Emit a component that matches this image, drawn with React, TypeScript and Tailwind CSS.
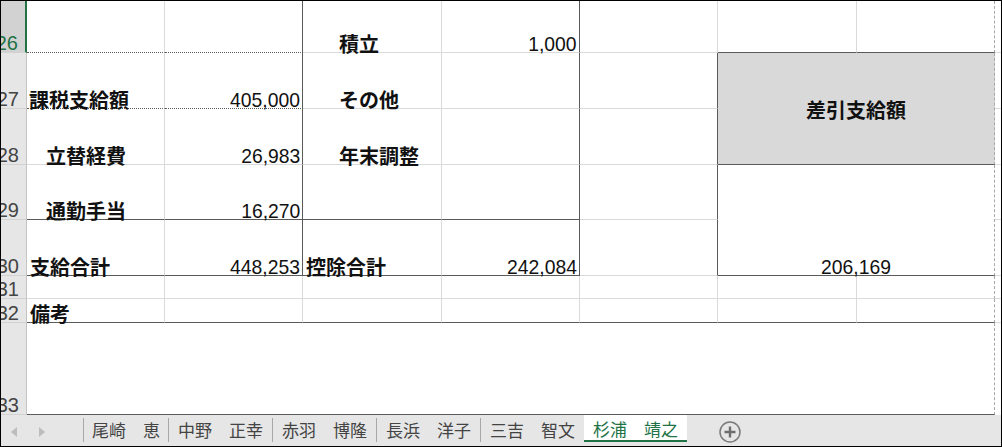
import React from "react";

const lb = "border-b border-b-[#dadada]";
const lr = "border-r border-r-[#dadada]";
const db = "border-b border-b-[#5a5a5a]";
const dr = "border-r border-r-[#5a5a5a]";
const ob = "border-b border-b-[#5a5a5a] [border-bottom-style:dotted]";
const xr = "border-r border-r-[#a8a8a8] [border-right-style:dashed]";

function C({ cls = "", children }: { cls?: string; children?: React.ReactNode }) {
  return (
    <div className={`flex items-end leading-[17px] whitespace-nowrap ${cls}`}>
      {children}
    </div>
  );
}

function N({ v, center = false }: { v: string; center?: boolean }) {
  return (
    <span
      className={`inline-block text-[21px] leading-[17px] scale-x-[0.92] font-['Liberation_Sans',sans-serif] ${
        center ? "origin-center" : "origin-right"
      }`}
    >
      {v}
    </span>
  );
}

function RH({ n, sel = false }: { n: string; sel?: boolean }) {
  return (
    <div
      className={`flex items-end justify-end pr-[8px] leading-[17px] overflow-hidden border-b border-b-[#d2d2d2] font-['Liberation_Sans',sans-serif] ${
        sel
          ? "bg-[#d2d2d2] text-[#217346] border-r-2 border-r-[#217346]"
          : "bg-[#e6e6e6] text-[#444444] border-r border-r-[#c4c4c4]"
      }`}
    >
      <span className="-mr-px">{n}</span>
    </div>
  );
}

const lbl = "font-bold text-[#111111]";
const num = "justify-end pr-[2px] text-[#111111]";

function Sep() {
  return <div className="w-px h-[24px] mt-[3px] bg-[#a8a8a8]" />;
}

function Tab({ name, cls = "px-[9px]" }: { name: string; cls?: string }) {
  return (
    <div className={`h-[30px] flex items-center text-[17px] text-[#444444] whitespace-nowrap ${cls}`}>
      {name}
    </div>
  );
}

export default function App() {
  return (
    <div className="w-[1002px] h-[447px] border border-black bg-white overflow-hidden font-['Noto_Sans_CJK_JP','Noto_Sans',sans-serif] text-[20px]">
      <div className="grid grid-cols-[26px_138px_138px_139px_138px_138px_139px_138px_6px] grid-rows-[52px_56px_56px_55px_56px_23px_24px_92px]">
        {/* Row 26 */}
        <RH n="26" sel />
        <C cls={`${ob} ${lr}`} />
        <C cls={`${ob} ${dr}`} />
        <C cls={`${lb} ${lr} pl-[36px] ${lbl}`}>積立</C>
        <C cls={`${lb} ${dr} ${num}`}><N v="1,000" /></C>
        <C cls={`${lb} ${lr}`} />
        <C cls={`${db} ${lr}`} />
        <C cls={`${db} ${xr}`} />
        <C cls={lb} />

        {/* Row 27 */}
        <RH n="27" />
        <C cls={`${ob} ${lr} pl-[2px] ${lbl}`}>課税支給額</C>
        <C cls={`${ob} ${dr} ${num}`}><N v="405,000" /></C>
        <C cls={`${lb} ${lr} pl-[36px] ${lbl}`}>その他</C>
        <C cls={`${lb} ${dr}`} />
        <C cls={`${lb} ${dr}`} />
        <div className={`col-start-7 col-span-2 row-start-2 row-span-2 flex items-center justify-center bg-[#d9d9d9] ${db} ${xr} font-bold text-[#111111] leading-none pt-[2px]`}>
          差引支給額
        </div>
        <C cls={lb} />

        {/* Row 28 */}
        <RH n="28" />
        <C cls={`${lb} ${lr} pl-[19px] ${lbl}`}>立替経費</C>
        <C cls={`${lb} ${dr} ${num}`}><N v="26,983" /></C>
        <C cls={`${lb} ${lr} pl-[36px] ${lbl}`}>年末調整</C>
        <C cls={`${lb} ${dr}`} />
        <C cls={`${lb} ${dr}`} />
        <C cls={lb} />

        {/* Row 29 */}
        <RH n="29" />
        <C cls={`${db} ${lr} pl-[19px] ${lbl}`}>通勤手当</C>
        <C cls={`${db} ${dr} ${num}`}><N v="16,270" /></C>
        <C cls={`${db} ${lr}`} />
        <C cls={`${db} ${dr}`} />
        <C cls={`${lb} ${dr}`} />
        <div className={`col-start-7 col-span-2 row-start-4 row-span-2 flex items-end justify-center leading-[17px] ${db} ${xr} text-[#111111]`}>
          <N v="206,169" center />
        </div>
        <C cls={lb} />

        {/* Row 30 */}
        <RH n="30" />
        <C cls={`${db} ${lr} pl-[3px] ${lbl}`}>支給合計</C>
        <C cls={`${db} ${dr} ${num}`}><N v="448,253" /></C>
        <C cls={`${db} ${lr} pl-[3px] ${lbl}`}>控除合計</C>
        <C cls={`${db} ${dr} ${num}`}><N v="242,084" /></C>
        <C cls={`${lb} ${dr}`} />
        <C cls={lb} />

        {/* Row 31 */}
        <RH n="31" />
        <C cls={`${lb} ${lr}`} />
        <C cls={`${lb} ${lr}`} />
        <C cls={`${lb} ${lr}`} />
        <C cls={`${lb} ${lr}`} />
        <C cls={`${lb} ${lr}`} />
        <C cls={`${lb} ${lr}`} />
        <C cls={`${lb} ${xr}`} />
        <C cls={lb} />

        {/* Row 32 */}
        <RH n="32" />
        <C cls={`${db} ${lr} pl-[3px] ${lbl}`}>備考</C>
        <C cls={`${db} ${lr}`} />
        <C cls={`${db} ${lr}`} />
        <C cls={`${db} ${lr}`} />
        <C cls={`${db} ${lr}`} />
        <C cls={`${db} ${lr}`} />
        <C cls={`${db} ${xr}`} />
        <C cls={lb} />

        {/* Row 33 */}
        <RH n="33" />
        <div className={`col-span-7 ${db} ${xr}`} />
        <C />
      </div>

      {/* Sheet tabs */}
      <div className="flex h-[31px] bg-[#e6e6e6]">
        <div className="w-[82px] h-full flex items-center">
          <svg width="6" height="10" viewBox="0 0 6 10" className="ml-[10px] mt-[3px]">
            <path d="M6 0 L0 5 L6 10 Z" fill="#bdbdbd" />
          </svg>
          <svg width="6" height="10" viewBox="0 0 6 10" className="ml-[22px] mt-[3px]">
            <path d="M0 0 L6 5 L0 10 Z" fill="#bdbdbd" />
          </svg>
        </div>
        <Sep />
        <Tab name="尾崎　恵" cls="px-[8px]" />
        <Sep />
        <Tab name="中野　正幸" />
        <Sep />
        <Tab name="赤羽　博隆" />
        <Sep />
        <Tab name="長浜　洋子" />
        <Sep />
        <Tab name="三吉　智文" />
        <div className="h-[27px] flex items-center px-[9px] pt-[2px] bg-white border-b-2 border-b-[#217346] text-[17px] text-[#217346] whitespace-nowrap">
          杉浦　靖之
        </div>
        <div className="ml-[32px] h-full flex items-center pt-[2px]">
          <svg width="22" height="22" viewBox="0 0 22 22">
            <circle cx="11" cy="11" r="10" fill="none" stroke="#7a7a7a" strokeWidth="1.5" />
            <path d="M11 5.5 V16.5 M5.5 11 H16.5" stroke="#6e6e6e" strokeWidth="2.4" />
          </svg>
        </div>
      </div>
    </div>
  );
}
